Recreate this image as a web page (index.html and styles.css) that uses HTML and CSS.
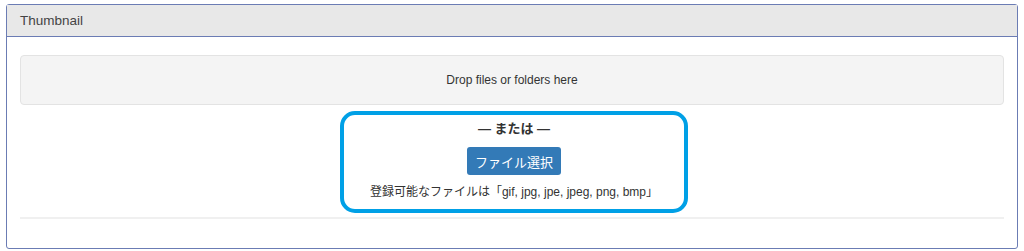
FILE: index.html
```html
<!DOCTYPE html>
<html lang="ja">
<head>
    <meta charset="UTF-8">
    <title>Thumbnail</title>
    <link rel="stylesheet" href="styles.css">
</head>
<body>
    <div class="panel">
        <div class="panel-heading">Thumbnail</div>
        <div class="panel-body">
            <div class="drop-zone">Drop files or folders here</div>
            <div class="select-box">
                <div class="or-text">— または —</div>
                <button class="select-btn">ファイル選択</button>
                <div class="file-types">登録可能なファイルは「gif, jpg, jpe, jpeg, png, bmp」</div>
            </div>
            <hr class="divider">
        </div>
    </div>
</body>
</html>
```

FILE: styles.css
```css
* {
    margin: 0;
    padding: 0;
    box-sizing: border-box;
}
body {
    font-family: "Liberation Sans", "Noto Sans CJK JP", Arial, sans-serif;
    background: white;
    color: #333;
    padding: 4px 6px 3px 6px;
}
.panel {
    border: 1px solid #6b7cb4;
    border-radius: 3px;
    height: 245px;
}
.panel-heading {
    background: #e8e8e8;
    border-bottom: 1px solid #6b7cb4;
    height: 32px;
    padding: 0 13px;
    display: flex;
    align-items: center;
    font-size: 13.5px;
    color: #444;
}
.panel-body {
    padding: 18px 13px 0 13px;
}
.drop-zone {
    height: 50px;
    background: #f4f4f4;
    border: 1px solid #e3e3e3;
    border-radius: 4px;
    display: flex;
    align-items: center;
    justify-content: center;
    font-size: 12px;
    color: #333;
}
.select-box {
    width: 348px;
    height: 102px;
    margin: 7px auto 0 auto;
    position: relative;
    left: 2px;
    top: -1px;
    border: 4px solid #00a0e6;
    border-radius: 15px;
    display: flex;
    flex-direction: column;
    align-items: center;
    padding-top: 6px;
}
.or-text {
    font-size: 13px;
    font-weight: bold;
    line-height: 16px;
}
.select-btn {
    margin-top: 10px;
    background: #337ab7;
    color: white;
    border: none;
    border-radius: 3px;
    width: 94px;
    height: 28px;
    font-family: inherit;
    font-size: 13px;
}
.file-types {
    margin-top: 8px;
    font-size: 12px;
    line-height: 18px;
}
.divider {
    border: none;
    border-top: 2px solid #f0f0f0;
    margin-top: 3px;
}
```
